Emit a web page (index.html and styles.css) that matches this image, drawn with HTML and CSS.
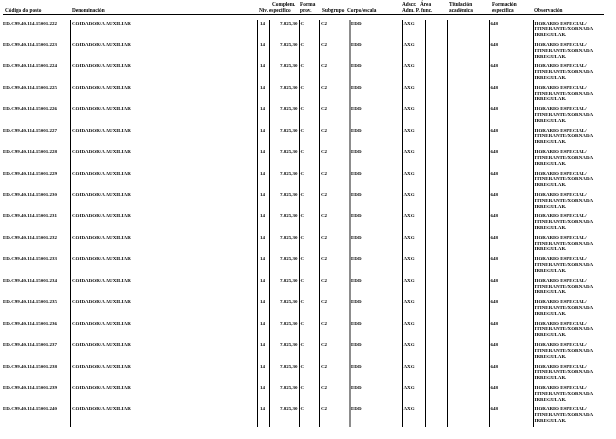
FILE: index.html
```html
<!DOCTYPE html>
<html lang="gl">
<head>
<meta charset="utf-8">
<title>Postos</title>
<link rel="stylesheet" href="styles.css">
</head>
<body>
<div class="sheet">
  <div class="head">
    <div class="h h-cod">Código do posto</div>
    <div class="h">Denominación</div>
    <div class="h">Niv.</div>
    <div class="h"><span class="ind3">Complem.</span><br>específico</div>
    <div class="h">Forma<br>prov.</div>
    <div class="h">Subgrupo</div>
    <div class="h">Corpo/escala</div>
    <div class="h">Adscr.<br>Adm. P.</div>
    <div class="h">Área<br><span class="ind1">func.</span></div>
    <div class="h">Titulación<br>académica</div>
    <div class="h">Formación<br>específica</div>
    <div class="h">Observación</div>
  </div>
  <div class="rows" id="rows"></div>
</div>
<script src="app.js"></script>
</body>
</html>
```
FILE: styles.css
```css
html, body {
  margin: 0;
  padding: 0;
  background: #ffffff;
}
body {
  font-family: "Liberation Serif", "Times New Roman", serif;
  color: #000000;
  width: 616px;
  height: 439px;
  overflow: hidden;
}
.sheet {
  display: flex;
  flex-direction: column;
  will-change: transform;
}
.head {
  margin-left: 3px;
  width: 601px;
  height: 14px;
  border-bottom: 1px solid #000;
  display: grid;
  grid-template-columns: 69px 187px 10px 31px 22px 25px 55px 18px 29px 43px 42px 70px;
  align-items: end;
}
.h {
  font-size: 5.3px;
  line-height: 6.4px;
  font-weight: bold;
  white-space: nowrap;
  padding-bottom: 0.5px;
}
.h-cod { padding-left: 2px; }
.ind3 { padding-left: 3px; }
.ind1 { padding-left: 1px; }
.rows {
  margin-top: 5px;
  display: grid;
  grid-auto-rows: 21.44px;
}
.row {
  display: grid;
  grid-template-columns: 70px 187px 12px 30px 20px 30px 53px 23px 22px 42px 44px 72px;
}
.c {
  font-size: 5px;
  line-height: 5.8px;
  font-weight: bold;
  white-space: nowrap;
  border-left: 1px solid #000;
  padding-top: 0.5px;
}
.c0 { border-left: none; padding-left: 3px; }
.c1 { padding-left: 1px; }
.c2 { padding-left: 2px; }
.c3 { text-align: right; padding-right: 1.5px; }
.c4 { padding-left: 0.5px; }
.c5 { padding-left: 1px; }
.c6 { border-left: 2px solid #8c8c8c; }
.c7 { padding-left: 0.5px; }
.c10 { padding-left: 0.5px; }
.c11 { padding-left: 0.5px; }
```
FILE: app.js
```js
(function () {
  var rows = document.getElementById('rows');
  var html = '';
  for (var n = 222; n <= 240; n++) {
    html += '<div class="row">' +
      '<div class="c c0">ED.C99.40.114.15001.' + n + '</div>' +
      '<div class="c c1">COIDADOR/A AUXILIAR</div>' +
      '<div class="c c2">14</div>' +
      '<div class="c c3">7.825,30</div>' +
      '<div class="c c4">C</div>' +
      '<div class="c c5">C2</div>' +
      '<div class="c c6">EDD</div>' +
      '<div class="c c7">AXG</div>' +
      '<div class="c c8"></div>' +
      '<div class="c c9"></div>' +
      '<div class="c c10">648</div>' +
      '<div class="c c11">HORARIO ESPECIAL/<br>ITINERANTE/XORNADA<br>IRREGULAR.</div>' +
      '</div>';
  }
  rows.innerHTML = html;
})();
```
